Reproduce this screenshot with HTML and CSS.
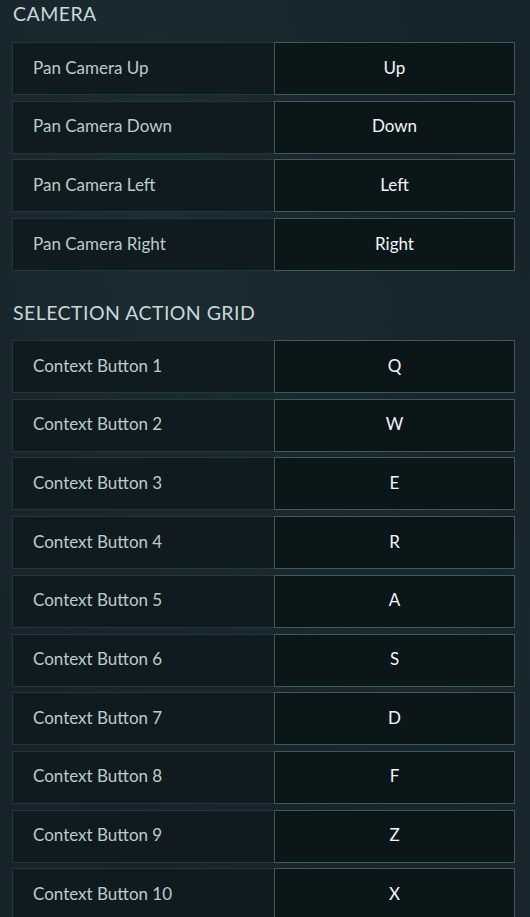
FILE: index.html
```html
<!DOCTYPE html>
<html>
<head>
<meta charset="utf-8">
<link rel="stylesheet" href="styles.css">
</head>
<body>
<div class="page">
  <section class="group">
    <h2 class="group-title">Camera</h2>
    <div class="rows">
      <div class="row"><div class="label">Pan Camera Up</div><div class="key">Up</div></div>
      <div class="row"><div class="label">Pan Camera Down</div><div class="key">Down</div></div>
      <div class="row"><div class="label">Pan Camera Left</div><div class="key">Left</div></div>
      <div class="row"><div class="label">Pan Camera Right</div><div class="key">Right</div></div>
    </div>
  </section>
  <section class="group">
    <h2 class="group-title">Selection Action Grid</h2>
    <div class="rows">
      <div class="row"><div class="label">Context Button 1</div><div class="key">Q</div></div>
      <div class="row"><div class="label">Context Button 2</div><div class="key">W</div></div>
      <div class="row"><div class="label">Context Button 3</div><div class="key">E</div></div>
      <div class="row"><div class="label">Context Button 4</div><div class="key">R</div></div>
      <div class="row"><div class="label">Context Button 5</div><div class="key">A</div></div>
      <div class="row"><div class="label">Context Button 6</div><div class="key">S</div></div>
      <div class="row"><div class="label">Context Button 7</div><div class="key">D</div></div>
      <div class="row"><div class="label">Context Button 8</div><div class="key">F</div></div>
      <div class="row"><div class="label">Context Button 9</div><div class="key">Z</div></div>
      <div class="row"><div class="label">Context Button 10</div><div class="key">X</div></div>
    </div>
  </section>
</div>
</body>
</html>
```
FILE: styles.css
```css
html, body {
  margin: 0;
  padding: 0;
  height: 100%;
}
body {
  background-color: #15232a;
  background-image:
    radial-gradient(ellipse at 30% 20%, rgba(40, 60, 68, 0.35), rgba(0,0,0,0) 60%),
    radial-gradient(ellipse at 80% 70%, rgba(35, 55, 62, 0.3), rgba(0,0,0,0) 60%);
  font-family: "Lato", "Noto Sans", sans-serif;
  overflow: hidden;
}
.page {
  padding: 0 15px 0 12px;
  display: flex;
  flex-direction: column;
  gap: 20px;
}
.group-title {
  margin: 0;
  padding: 1px 0 0 1px;
  height: 42px;
  box-sizing: border-box;
  font-size: 19.5px;
  font-weight: 400;
  line-height: 26px;
  text-transform: uppercase;
  color: #c9d8d8;
  letter-spacing: 0.45px;
}
.group + .group .group-title {
  height: 49px;
  padding-top: 9px;
}
.rows {
  display: flex;
  flex-direction: column;
  gap: 5.7px;
}
.row {
  display: grid;
  grid-template-columns: 262px 241px;
  height: 53px;
}
.label {
  display: flex;
  align-items: center;
  padding: 0 0 3px 20px;
  background: #0f1b1f;
  border: 1px solid #26363b;
  border-right: none;
  color: #bccccb;
  font-size: 17px;
}
.key {
  display: flex;
  align-items: center;
  justify-content: center;
  padding-bottom: 3px;
  background: #0b1619;
  border: 1.5px solid #46575a;
  color: #f4f7f7;
  font-size: 17px;
}
```
